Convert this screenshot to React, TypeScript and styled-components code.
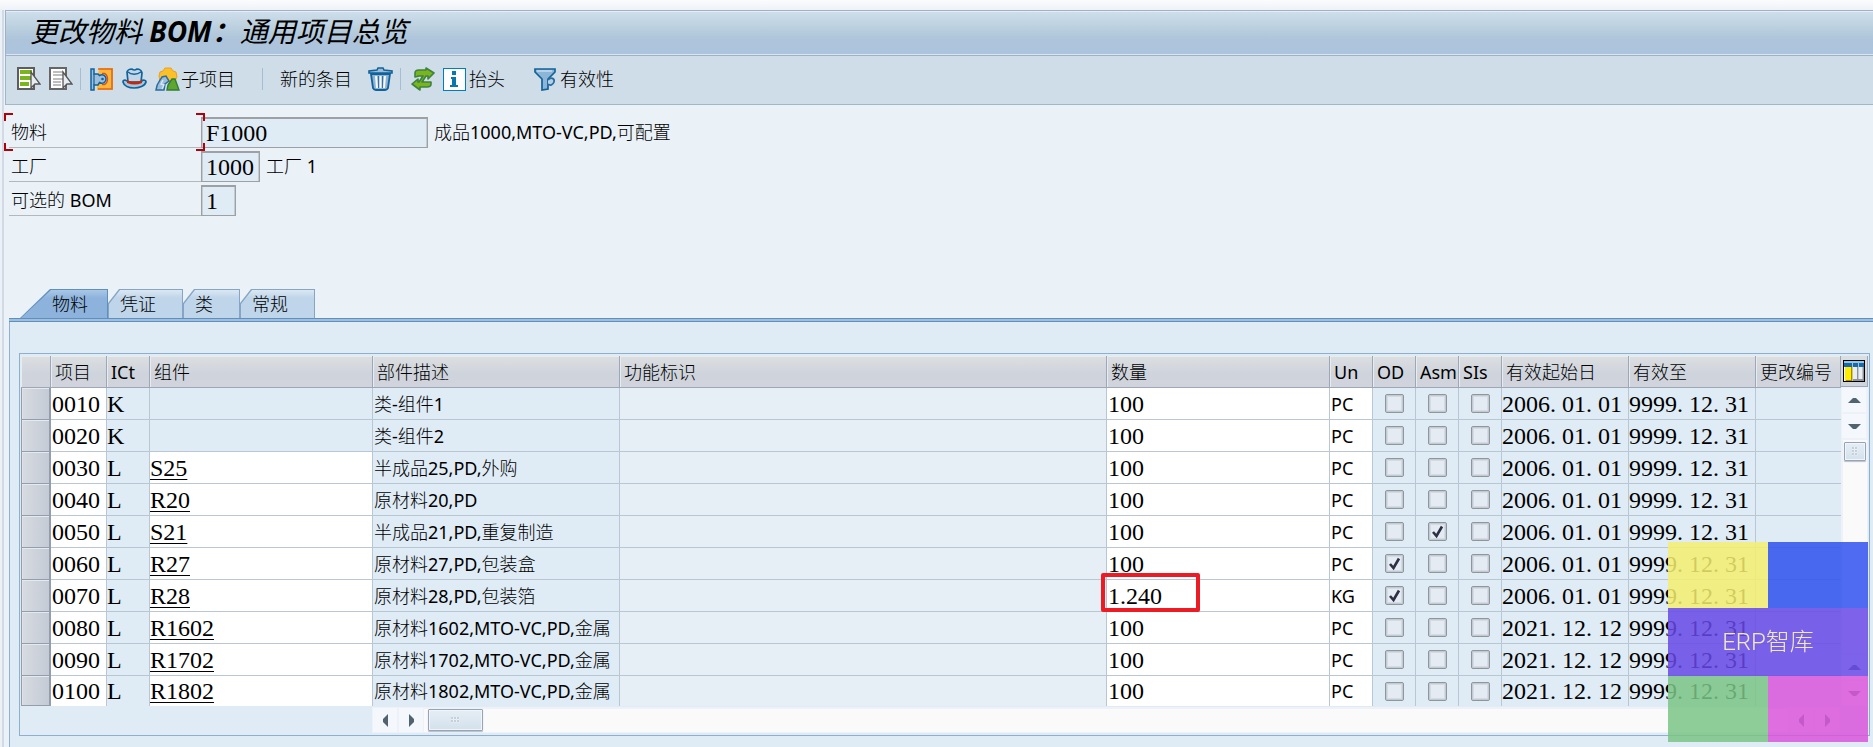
import React from 'react';
import styled, { createGlobalStyle, css } from 'styled-components';

const sans = '"Noto Sans", "Noto Sans CJK SC", sans-serif';
const serif = '"Liberation Serif", "Noto Sans CJK SC", serif';

const GlobalStyle = createGlobalStyle`
  *, *::before, *::after { box-sizing: border-box; }
  body { margin: 0; background: #eaf1f7; }
  button, input { font: inherit; color: inherit; margin: 0; padding: 0; border: 0; background: none; border-radius: 0; }
  button { cursor: pointer; }
  svg { display: block; flex: none; }
`;

const Window = styled.div`
  display: flex;
  flex-direction: column;
  min-height: 100vh;
  overflow: hidden;
  padding-left: 2px;
  background: linear-gradient(#fbfcfe, #eef2f7 10px, #eaf1f7 11px);
  font: 300 18px/24px ${sans};
  color: #000;
`;

const Frame = styled.div`
  display: flex;
  flex: 1;
  flex-direction: column;
  margin-top: 10px;
  border-left: 2px solid #d3dae6;
  padding-left: 1px;
`;

const TitleBar = styled.header`
  height: 46px;
  padding-left: 24px;
  border: 1px solid #9eb1c9;
  border-right: 0;
  box-shadow: inset 0 1px #e4edf4, inset 0 -1px #dbe5ee;
  background: linear-gradient(#cfdfeb, #b7cddd 45%, #adc4db 65%, #acc4dd);
`;

const Title = styled.h1`
  margin: 0;
  font: italic 400 28px/41px ${sans};
  color: #000;
  b { font-weight: 700; }
`;

const Toolbar = styled.div`
  display: flex;
  align-items: center;
  height: 49px;
  padding: 0 0 2px 11px;
  border: solid #a3b5ca;
  border-width: 0 0 1px 1px;
  background: #cfdde8;
`;

const ToolButton = styled.button<{ $gap?: number; $inner?: number }>`
  display: flex;
  align-items: center;
  gap: ${p => p.$inner ?? 1}px;
  height: 30px;
  margin-right: ${p => p.$gap ?? 8}px;
  line-height: 30px;
`;

const Divider = styled.i<{ $gap: number }>`
  width: 1px;
  height: 22px;
  margin-right: ${p => p.$gap}px;
  background: #a6bdd2;
`;

const Latin = styled.span`
  font-weight: 400;
`;

const Form = styled.form`
  display: flex;
  flex-direction: column;
  gap: 3px;
  padding: 12px 0 73px 4px;
`;

const Field = styled.div`
  display: flex;
  align-items: flex-start;
  height: 31px;
`;

const FieldLabel = styled.label<{ $focus?: boolean }>`
  position: relative;
  width: 192px;
  height: 31px;
  padding-left: 2px;
  border-bottom: 1px solid #b5b8ba;
  line-height: 31px;
  ${p => p.$focus && css`
    &::before, &::after {
      content: '';
      position: absolute;
      top: -4px;
      bottom: -4px;
      width: 9px;
      --c: #b0000c;
      background:
        linear-gradient(var(--c), var(--c)) top / 100% 2px,
        linear-gradient(var(--c), var(--c)) bottom / 100% 2px,
        linear-gradient(var(--c), var(--c)) var(--side) top / 2px 8px,
        linear-gradient(var(--c), var(--c)) var(--side) bottom / 2px 8px;
      background-repeat: no-repeat;
    }
    &::before { left: -5px; --side: left; }
    &::after { right: -4px; --side: right; z-index: 1; }
  `}
`;

const FieldInput = styled.input<{ $width: number }>`
  width: ${p => p.$width}px;
  height: 31px;
  padding-left: 4px;
  border: 1px solid #9da1a3;
  border-top-width: 2px;
  box-shadow: inset 1px 0 #c4cbd0, inset -1px 0 #c4cbd0;
  background: #dfebf5;
  font: 24px/28px ${serif};
`;

const FieldText = styled.span`
  padding-left: 6px;
  line-height: 31px;
`;

const TabList = styled.div`
  display: flex;
  padding-left: 15px;
`;

const Tab = styled.button<{ $active?: boolean; $width: number }>`
  position: relative;
  isolation: isolate;
  width: ${p => p.$width}px;
  height: 29px;
  padding-left: ${p => (p.$active ? 32 : 12)}px;
  text-align: left;
  line-height: 31px;
  &::before, &::after {
    content: '';
    position: absolute;
    inset: 0;
    z-index: -1;
    clip-path: polygon(${p => (p.$active ? '30px 0, 100% 0, 100% 100%, 0 100%' : '11px 0, 100% 0, 100% 100%, 0 100%, 0 14px')});
    background: ${p => (p.$active ? '#5f8fbd' : '#86a5c4')};
  }
  &::after {
    inset: 1px 1px 0;
    background: ${p => (p.$active ? 'linear-gradient(#a9c8e6, #8db3dc 8px)' : 'linear-gradient(#dbe8f3, #bfd5ea 8px)')};
  }
`;

const Panel = styled.main`
  flex: 1;
  margin-left: 4px;
  padding: 31px 3px 12px 9px;
  border-left: 1px solid #8fb0d1;
  background: #dfebf5;
`;

const TabRule = styled.div`
  height: 4px;
  margin-left: 4px;
  border: solid #628fb9;
  border-width: 1px 0;
  background: #9dbfe0;
`;

const GridBox = styled.section`
  border: 1px solid #8fafcf;
  padding: 2px 1px;
`;

const GridTop = styled.div`
  display: flex;
`;

const Table = styled.table`
  flex: 1;
  width: 0;
  table-layout: fixed;
  border-collapse: separate;
  border-spacing: 0;
`;

const HeadCell = styled.th`
  height: 32px;
  padding: 2px 0 0 4px;
  overflow: hidden;
  border: solid #9ca7b7;
  border-width: 0 1px 1px 0;
  box-shadow: inset 1px 1px #e9ecee;
  background: linear-gradient(#dcdfe1, #ced3dc 60%, #d2d4dc);
  text-align: left;
  font-weight: 300;
  line-height: 29px;
  white-space: nowrap;
`;

const tones = { edit: '#ffffff', read: '#dfebf5', pale: '#e7eff6' };

const Cell = styled.td<{ $tone: keyof typeof tones; $serif?: boolean }>`
  position: relative;
  height: 32px;
  padding: 0 0 0 ${p => (p.$serif ? 0 : 1)}px;
  border: solid #b9c7d4;
  border-width: 0 1px 1px 0;
  background: ${p => tones[p.$tone]};
  font: ${p => (p.$serif ? `24px/30px ${serif}` : `300 18px/30px ${sans}`)};
  white-space: nowrap;
  tr:last-child > & { height: 30px; border-bottom: 0; line-height: 28px; }
  &:last-child { border-right: 0; }
`;

const SelectCell = styled.td`
  height: 32px;
  padding: 0;
  tr:last-child > & { height: 30px; }
`;

const RowButton = styled.button`
  display: block;
  width: 30px;
  height: 32px;
  border: solid #929dae;
  border-width: 0 2px 1px 1px;
  box-shadow: inset 0 1px #e6e9ed, inset 1px 0 #dfe3e8;
  background: linear-gradient(90deg, #d7dbe1, #c4cbd5);
  tr:last-child & { height: 30px; }
`;

const CellInput = styled.input`
  display: block;
  width: 100%;
  height: 28px;
  padding-left: 1px;
`;

const UnitInput = styled(CellInput)`
  padding-left: 0;
  font-weight: 400;
`;

const ItemLink = styled.a`
  color: inherit;
  text-decoration: underline;
  text-decoration-thickness: 1px;
  text-underline-offset: 3px;
`;

const DatePart = styled.span`
  margin-right: 6px;
  &:last-child { margin-right: 0; }
`;

const Mark = styled.div`
  position: absolute;
  top: -7px;
  left: -6px;
  z-index: 1;
  width: 99px;
  height: 39px;
  border: 4px solid #ed1c24;
  border-radius: 2px;
  pointer-events: none;
`;

const CheckWrap = styled.label`
  display: grid;
  place-content: center;
  padding-right: 1px;
  & > * { grid-area: 1 / 1; }
`;

const CheckBox = styled.input`
  appearance: none;
  width: 19px;
  height: 19px;
  border: 1px solid #8f9698;
  border-radius: 2px;
  box-shadow: inset 0 0 0 1px #c3cad4, inset 0 0 0 2px #d4dbe6;
  background: #e4ebf3;
`;

const SideBar = styled.div`
  display: flex;
  flex-direction: column;
  width: 27px;
  background: #eef2f8;
`;

const ConfigButton = styled.button`
  display: grid;
  place-content: center;
  height: 31px;
  border: solid #9ca7b7;
  border-width: 0 1px 1px 0;
  background: linear-gradient(#dcdfe1, #ced3dc);
`;

const ArrowButton = styled.button`
  display: grid;
  place-content: center;
  flex: none;
  width: 24px;
  height: 24px;
  margin: 1px;
  background: #f4f7fb;
`;

const VTrack = styled.div`
  flex: 1;
  margin: 1px 1px 1px 2px;
  padding: 2px 0 0 1px;
  background: #fafafb;
`;

const Thumb = styled.button<{ $w: number; $h: number }>`
  display: grid;
  place-content: center;
  width: ${p => p.$w}px;
  height: ${p => p.$h}px;
  border: 1px solid #95a5b5;
  border-radius: 1px;
  box-shadow: 0 1px 1px #b5c0ca, inset 0 0 0 1px #f0f5fa;
  background: linear-gradient(#e6eef5, #d3e1ec);
`;

const HBar = styled.div`
  display: flex;
  align-items: center;
  height: 26px;
  margin: 1px 28px 0 351px;
  background: #eef2f8;
`;

const HTrack = styled.div`
  flex: 1;
  height: 23px;
  padding-left: 4px;
  background: #fafafb;
`;

const Badge = styled.aside`
  position: fixed;
  right: 5px;
  bottom: 5px;
  z-index: 2;
  display: grid;
  grid-template: 66px 68px 66px / 100px 100px;
`;

const Swatch = styled.div<{ $color: string; $wide?: boolean }>`
  display: grid;
  place-content: center;
  grid-column: ${p => (p.$wide ? '1 / 3' : 'auto')};
  background: ${p => p.$color};
  color: #f1e9c0;
  font: 300 24px/30px Roboto, "Noto Sans CJK SC", sans-serif;
`;

const ListIcon = () => (
  <svg width="24" height="24" viewBox="0 0 24 24">
    <rect x="1" y="1" width="16" height="21" fill="#fff" stroke="#5d5d5d" strokeWidth="2" />
    <path d="M3 5h12M3 11h12M3 17h9" stroke="#7ab51d" strokeWidth="4" />
    <path d="M14 5v16l4-4h5z" fill="#e8edf1" stroke="#555" strokeWidth="1.3" />
  </svg>
);

const PlainListIcon = () => (
  <svg width="24" height="24" viewBox="0 0 24 24">
    <rect x="1" y="1" width="16" height="21" fill="#fff" stroke="#666" strokeWidth="2" />
    <path d="M4 5h10M4 8h10M4 12h10M4 15h8M4 18h8" stroke="#a9a9a9" strokeWidth="1.6" />
    <path d="M14 5v16l4-4h5z" fill="#e8edf1" stroke="#555" strokeWidth="1.3" />
  </svg>
);

const ClassIcon = () => (
  <svg width="23" height="23" viewBox="0 0 23 23">
    <path d="M9 0h14v22H7v-3z" fill="#fbb83a" />
    <path d="M8 1h14v20H8" fill="none" stroke="#e2641a" strokeWidth="1.6" />
    <path d="M12 5.500h2.500q3 1.500 3 5.500t-3 5.500H12" fill="#d5e0ea" stroke="#dc5310" strokeWidth="1.4" />
    <path d="M1 1h3v5h4l1.500 1.500C13 5.500 16 8 16 11s-3 5.500-6.500 3.500L8 17H4v5H1z" fill="#9dbfdc" stroke="#12629a" strokeWidth="1.5" />
    <path d="M4 6v11" stroke="#12629a" strokeWidth="1.2" />
    <circle cx="12.500" cy="11" r="1.300" fill="#12629a" />
  </svg>
);

const HatIcon = () => (
  <svg width="25" height="24" viewBox="0 0 25 24">
    <path d="M3 13Q1 13 1 15c1 4 6 6 11 6s11-2 12-6q0-2-3-2l-1 1H5z" fill="#a9c6df" stroke="#12629a" strokeWidth="1.700" />
    <path d="M6 15 5 5q1-3 5-3 2 2 5 0 4 0 5 4l-1 9z" fill="#c2d6e8" stroke="#12629a" strokeWidth="1.700" />
    <path d="M6 5c3 3 9 3 13 0" fill="none" stroke="#12629a" strokeWidth="1.300" />
    <path d="M5 13c4 2 11 2 15 0v3q-7 3-15 0z" fill="#b92b12" />
  </svg>
);

const SceneIcon = () => (
  <svg width="25" height="24" viewBox="0 0 25 24">
    <path d="M4 9 5 5l3-1 2-3h6l2 3 3 1 1 5-2 4H5z" fill="#fbc02a" stroke="#f0a018" />
    <path d="M1 23c1-8 4-9 6-13l4-1 3 5-4 3-1 6z" fill="#9dbdd8" stroke="#2a6d9f" strokeWidth="1.5" />
    <path d="m8 13-2 4 3 1-2 4" fill="none" stroke="#d9e8f3" strokeWidth="1.4" />
    <path d="m12 23 1-5 4-6h3l4 11z" fill="#5fa62c" stroke="#2f7e3a" strokeWidth="1.4" />
  </svg>
);

const TrashIcon = () => (
  <svg width="25" height="24" viewBox="0 0 25 24">
    <path d="m3 7 2 14q1 2 3 2h9q2 0 3-2l2-14z" fill="#8fb3d2" stroke="#12629a" strokeWidth="1.800" />
    <path d="M1 6V4l8-1 1-2h5l1 2 8 1v2z" fill="#9dbdd8" stroke="#12629a" strokeWidth="1.6" />
    <path d="m8 9 1 12M12.500 9v12M17 9l-1 12" stroke="#f4f8fb" strokeWidth="2" />
    <path d="m10.500 9v12M14.500 9v12" stroke="#386f9b" strokeWidth="1" />
  </svg>
);

const SwapIcon = () => (
  <svg width="24" height="24" viewBox="0 0 24 24">
    <path d="M4 10V6q0-3 4-3h7V1l8 5-6 6V9h-2l-4 6h9v2q0 3-4 3H9v3l-8-6 6-5v3h1l4-6H8z" fill="#7ab51d" stroke="#3c8240" strokeWidth="1.600" strokeLinejoin="round" />
  </svg>
);

const InfoIcon = () => (
  <svg width="23" height="23" viewBox="0 0 23 23">
    <rect x=".5" y=".5" width="22" height="22" fill="#fff" stroke="#007cc0" />
    <path d="M9 3h4v4H9zM8 9h5v8h2v2H7v-2h2v-6H8z" fill="#0b78ad" />
  </svg>
);

const FilterIcon = () => (
  <svg width="23" height="23" viewBox="0 0 23 23">
    <path d="M1 1h20v3l-7 7v10l-6 1V11L1 4z" fill="#8db5d7" stroke="#12629a" strokeWidth="1.700" />
    <path d="M3 3h15" stroke="#c7dcec" strokeWidth="1.500" />
    <path d="M14 12c3-4 7-1 6 2s-4 4-6 2" fill="#b5cfe4" stroke="#2a6d9f" strokeWidth="1.700" />
  </svg>
);

const ConfigIcon = () => (
  <svg width="22" height="22" viewBox="0 0 22 22">
    <rect x=".5" y=".5" width="21" height="21" fill="#fff" stroke="#000" />
    <path d="M1 1h20v2H1z" fill="#8cc9ea" />
    <path d="M1 3h20v4H1z" fill="#1b67a8" />
    <path d="M2 7h7v14H2z" fill="#ffed00" />
    <path d="M8 7h1.500v14H8zM3 20h6v1H3z" fill="#a58b00" />
    <path d="M10 7h4v14h-4zM16 7h4v14h-4z" fill="#e8eef2" />
    <path d="M14 7h1.500v14H14zM19.500 7H21v14h-1.500zM10 19h11v2H10z" fill="#8d9499" />
    <path d="M9.500 3v4M15.500 3v4" stroke="#8cc9ea" />
  </svg>
);

const arrowPaths = { up: 'M0 9h13L8 4H5z', down: 'M0 4h13L8 9H5z', left: 'M9 0v13L4 8V5z', right: 'M4 0v13l5-5V5z' };

const Arrow = ({ dir }: { dir: keyof typeof arrowPaths }) => (
  <svg width="13" height="13" viewBox="0 0 13 13"><path d={arrowPaths[dir]} fill="#50636f" /></svg>
);

const Grip = ({ cols, rows }: { cols: number; rows: number }) => (
  <svg width={cols * 3} height={rows * 3} viewBox={`0 0 ${cols * 3} ${rows * 3}`}>
    {Array.from({ length: cols * rows }, (_, i) => (
      <rect key={i} x={(i % cols) * 3} y={Math.floor(i / cols) * 3} width="2" height="2" fill="#a6b6c4" stroke="#fff" strokeWidth=".4" />
    ))}
  </svg>
);

const Check = ({ label, checked }: { label: string; checked: boolean }) => (
  <CheckWrap>
    <CheckBox type="checkbox" aria-label={label} defaultChecked={checked} />
    {checked && (
      <svg width="19" height="19" viewBox="0 0 19 19">
        <path d="m5 10 3.500 4L14 4.500" fill="none" stroke="#2d2f45" strokeWidth="2.600" />
      </svg>
    )}
  </CheckWrap>
);

// Latin runs are set slightly heavier than the Chinese around them.
const Mixed = ({ children }: { children: string }) => (
  <>
    {children.split(/([\x21-\x7e]+)/).map((run, i) => (i % 2 ? <Latin key={i}>{run}</Latin> : run))}
  </>
);

const DateText = ({ value }: { value: string }) => (
  <>{value.split(/(?<=\.)/).map((part, i) => <DatePart key={i}>{part}</DatePart>)}</>
);

const columns: [string, number?][] = [
  ['', 30], ['项目', 56], ['ICt', 43], ['组件', 223], ['部件描述', 247], ['功能标识'], ['数量', 223], ['Un', 43],
  ['OD', 43], ['Asm', 43], ['SIs', 43], ['有效起始日', 127], ['有效至', 127], ['更改编号', 85],
];

const item = (no: string, cat: string, part: string, text: string, qty = '100', unit = 'PC', flags = '', from = '2006.01.01') =>
  ({ no, cat, part, text, qty, unit, flags, from });

const items = [
  item('0010', 'K', '', '类-组件1'),
  item('0020', 'K', '', '类-组件2'),
  item('0030', 'L', 'S25', '半成品25,PD,外购'),
  item('0040', 'L', 'R20', '原材料20,PD'),
  item('0050', 'L', 'S21', '半成品21,PD,重复制造', '100', 'PC', 'Asm'),
  item('0060', 'L', 'R27', '原材料27,PD,包装盒', '100', 'PC', 'OD'),
  item('0070', 'L', 'R28', '原材料28,PD,包装箔', '1.240', 'KG', 'OD'),
  item('0080', 'L', 'R1602', '原材料1602,MTO-VC,PD,金属', '100', 'PC', '', '2021.12.12'),
  item('0090', 'L', 'R1702', '原材料1702,MTO-VC,PD,金属', '100', 'PC', '', '2021.12.12'),
  item('0100', 'L', 'R1802', '原材料1802,MTO-VC,PD,金属', '100', 'PC', '', '2021.12.12'),
];

export default function App() {
  return (
    <Window>
      <GlobalStyle />
      <Frame>
        <TitleBar>
          <Title>更改物料 <b>BOM：</b>通用项目总览</Title>
        </TitleBar>
        <Toolbar>
          <ToolButton aria-label="全选"><ListIcon /></ToolButton>
          <ToolButton aria-label="取消全选" $gap={7}><PlainListIcon /></ToolButton>
          <Divider $gap={9} />
          <ToolButton aria-label="分类" $gap={9}><ClassIcon /></ToolButton>
          <ToolButton aria-label="抬头概览"><HatIcon /></ToolButton>
          <ToolButton $gap={27}><SceneIcon />子项目</ToolButton>
          <Divider $gap={17} />
          <ToolButton $gap={16}>新的条目</ToolButton>
          <ToolButton aria-label="删除" $gap={7}><TrashIcon /></ToolButton>
          <Divider $gap={10} />
          <ToolButton aria-label="切换"><SwapIcon /></ToolButton>
          <ToolButton $gap={29} $inner={3}><InfoIcon />抬头</ToolButton>
          <ToolButton $inner={3}><FilterIcon />有效性</ToolButton>
        </Toolbar>
        <Form>
          <Field>
            <FieldLabel htmlFor="material" $focus>物料</FieldLabel>
            <FieldInput id="material" $width={227} defaultValue="F1000" readOnly />
            <FieldText><Mixed>成品1000,MTO-VC,PD,可配置</Mixed></FieldText>
          </Field>
          <Field>
            <FieldLabel htmlFor="plant">工厂</FieldLabel>
            <FieldInput id="plant" $width={59} defaultValue="1000" readOnly />
            <FieldText><Mixed>工厂 1</Mixed></FieldText>
          </Field>
          <Field>
            <FieldLabel htmlFor="bom"><Mixed>可选的 BOM</Mixed></FieldLabel>
            <FieldInput id="bom" $width={35} defaultValue="1" readOnly />
          </Field>
        </Form>
        <TabList role="tablist">
          <Tab role="tab" aria-selected $active $width={88}>物料</Tab>
          <Tab role="tab" $width={75}>凭证</Tab>
          <Tab role="tab" $width={57}>类</Tab>
          <Tab role="tab" $width={75}>常规</Tab>
        </TabList>
        <TabRule />
        <Panel>
          <GridBox>
            <GridTop>
              <Table>
                <colgroup>
                  {columns.map(([name, width]) => <col key={name} width={width} />)}
                </colgroup>
                <thead>
                  <tr>{columns.map(([name]) => <HeadCell key={name} scope="col"><Mixed>{name}</Mixed></HeadCell>)}</tr>
                </thead>
                <tbody>
                  {items.map(row => (
                    <tr key={row.no}>
                      <SelectCell><RowButton aria-label={`选择 ${row.no}`} /></SelectCell>
                      <Cell $tone="edit" $serif><CellInput aria-label={`项目 ${row.no}`} defaultValue={row.no} /></Cell>
                      <Cell $tone="read" $serif>{row.cat}</Cell>
                      <Cell $tone={row.part ? 'edit' : 'read'} $serif>{row.part && <ItemLink href="#">{row.part}</ItemLink>}</Cell>
                      <Cell $tone="read"><Mixed>{row.text}</Mixed></Cell>
                      <Cell $tone="pale" />
                      <Cell $tone="edit" $serif>
                        <CellInput aria-label={`数量 ${row.no}`} defaultValue={row.qty} />
                        {row.unit === 'KG' && <Mark />}
                      </Cell>
                      <Cell $tone="edit"><UnitInput aria-label={`单位 ${row.no}`} defaultValue={row.unit} /></Cell>
                      {['OD', 'Asm', 'SIs'].map(flag => (
                        <Cell key={flag} $tone="read"><Check label={`${flag} ${row.no}`} checked={row.flags === flag} /></Cell>
                      ))}
                      <Cell $tone="read" $serif><DateText value={row.from} /></Cell>
                      <Cell $tone="read" $serif><DateText value="9999.12.31" /></Cell>
                      <Cell $tone="read" />
                    </tr>
                  ))}
                </tbody>
              </Table>
              <SideBar>
                <ConfigButton aria-label="表格设置"><ConfigIcon /></ConfigButton>
                <ArrowButton aria-label="向上"><Arrow dir="up" /></ArrowButton>
                <ArrowButton aria-label="向下"><Arrow dir="down" /></ArrowButton>
                <VTrack><Thumb aria-label="垂直滚动" $w={22} $h={19}><Grip cols={2} rows={3} /></Thumb></VTrack>
                <ArrowButton aria-label="上一页"><Arrow dir="up" /></ArrowButton>
                <ArrowButton aria-label="下一页"><Arrow dir="down" /></ArrowButton>
              </SideBar>
            </GridTop>
            <HBar>
              <ArrowButton aria-label="向左"><Arrow dir="left" /></ArrowButton>
              <ArrowButton aria-label="向右"><Arrow dir="right" /></ArrowButton>
              <HTrack><Thumb aria-label="水平滚动" $w={55} $h={22}><Grip cols={3} rows={2} /></Thumb></HTrack>
              <ArrowButton aria-label="左移一列"><Arrow dir="left" /></ArrowButton>
              <ArrowButton aria-label="右移一列"><Arrow dir="right" /></ArrowButton>
            </HBar>
          </GridBox>
        </Panel>
      </Frame>
      <Badge>
        <Swatch $color="rgba(245, 238, 112, 0.85)" />
        <Swatch $color="rgba(47, 81, 239, 0.85)" />
        <Swatch $color="rgba(103, 72, 230, 0.85)" $wide>ERP智库</Swatch>
        <Swatch $color="rgba(123, 196, 134, 0.85)" />
        <Swatch $color="rgba(217, 86, 218, 0.85)" />
      </Badge>
    </Window>
  );
}
